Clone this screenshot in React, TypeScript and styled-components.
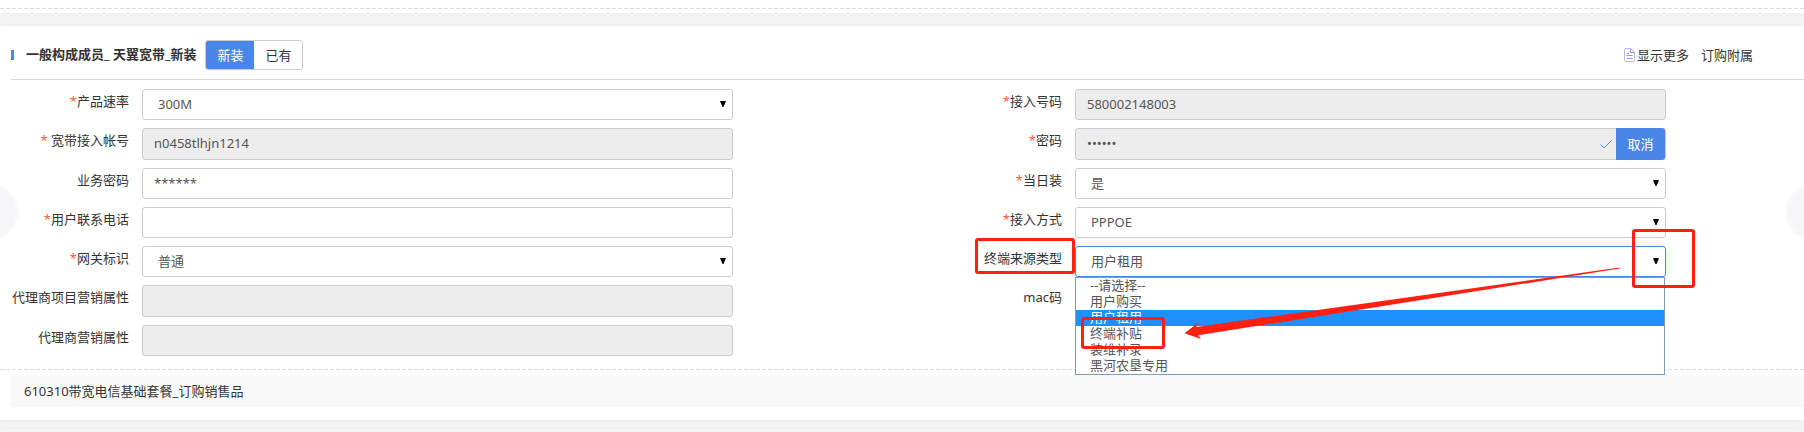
import React from "react";
import styled, { createGlobalStyle, css } from "styled-components";

const Global = createGlobalStyle`
  *, *::before, *::after { box-sizing: border-box; }
  body { margin: 0; background: #f4f4f4; overflow-x: hidden; }
  body, button, input, select {
    font-family: "Noto Sans", "Noto Sans CJK SC", sans-serif;
    font-size: 13px;
    color: #333;
  }
`;

const Page = styled.div`
  position: relative;
  overflow: hidden;
`;

const Dashes = styled.div`
  height: 1px;
  background: repeating-linear-gradient(90deg, #ddd 0 4px, transparent 4px 6px);
`;

const Card = styled.section`
  background: #fff;
  box-shadow: 0 0 6px rgba(0, 0, 0, 0.05);
`;

const PreviousCard = styled(Card)`
  padding: 8px 0 4px;
  margin-bottom: 13px;
`;

const NextCard = styled(Card)`
  margin-top: 9px;
  height: 3px;
  background: #f6f6f6;
`;

const Header = styled.header`
  display: flex;
  align-items: center;
  margin-left: 11px;
  padding: 14px 51px 9px 0;
  border-bottom: 1px solid #d9d9d9;
`;

const Marker = styled.span`
  width: 3px;
  height: 10px;
  margin-right: 12px;
  background: #4a86e8;
`;

const Title = styled.h2`
  margin: 0 9px 2px 0;
  font-size: 13px;
  line-height: 20px;
  font-weight: 600;
  white-space: pre;
`;

const Toggle = styled.div`
  display: flex;
  border: 1px solid #ccc;
  border-radius: 3px;
  overflow: hidden;
`;

const ToggleButton = styled.button<{ $active?: boolean }>`
  width: 48px;
  height: 28px;
  padding: 0 0 1px;
  border: 0;
  background: ${(p) => (p.$active ? "#4a86e8" : "#fff")};
  color: ${(p) => (p.$active ? "#fff" : "#333")};
`;

const Links = styled.nav`
  display: flex;
  gap: 12px;
  margin-left: auto;
`;

const HeaderLink = styled.a`
  display: flex;
  align-items: center;
  gap: 2px;
  line-height: 20px;
  color: #333;
  text-decoration: none;
`;

const Form = styled.form`
  display: grid;
  grid-template-columns: 1fr 1fr;
  grid-template-rows: repeat(7, 1fr);
  column-gap: 200px;
  row-gap: 8px;
  min-height: 267px;
  margin: 9px 138px 13px 0;
`;

const Row = styled.div`
  display: grid;
  grid-template-columns: 129px 1fr;
  column-gap: 13px;
`;

const Label = styled.label`
  line-height: 24px;
  text-align: right;
  white-space: nowrap;
`;

const Star = styled.span`
  color: #ff5a36;
`;

const Control = styled.div<{ $focus?: boolean }>`
  position: relative;
  display: flex;
  border-radius: 3px;
  ${(p) => p.$focus && css`box-shadow: 0 0 8px rgba(170, 210, 110, 0.4);`}
`;

const box = css`
  flex: 1;
  width: 100%;
  min-width: 0;
  height: 100%;
  border: 1px solid #ccc;
  border-radius: 3px;
  background: #fff;
  color: #555;
  outline: 0;
`;

const TextBox = styled.input`
  ${box}
  padding: 0 11px 1px;
  &:read-only { background: #ededed; }
`;

const SelectBox = styled.select<{ $focus?: boolean }>`
  ${box}
  appearance: none;
  padding: 0 15px 1px;
  border-color: ${(p) => (p.$focus ? "#4a86e8" : "#ccc")};
`;

const Arrow = styled.svg`
  position: absolute;
  right: 7px;
  top: 12px;
  pointer-events: none;
`;

const Check = styled.svg`
  position: absolute;
  right: 54px;
  top: 12px;
`;

const CancelButton = styled.button`
  position: absolute;
  top: 0;
  right: 1px;
  width: 49px;
  height: 100%;
  padding: 0;
  border: 0;
  border-radius: 0 3px 3px 0;
  background: #4a86e8;
  color: #fff;
`;

const Options = styled.ul`
  position: absolute;
  z-index: 2;
  top: 100%;
  left: 0;
  right: 1px;
  margin: 0;
  padding: 0;
  border: 1px solid #7f9db9;
  background: #fff;
  list-style: none;
`;

const Option = styled.li<{ $selected?: boolean }>`
  padding-left: 14px;
  height: 16px;
  line-height: 14px;
  color: ${(p) => (p.$selected ? "#fff" : "#555")};
  background: ${(p) => (p.$selected ? "#1e90ff" : "#fff")};
`;

const Footer = styled.div`
  padding: 5px 0 13px 11px;
`;

const Offer = styled.p`
  margin: 0;
  padding: 0 13px;
  line-height: 32px;
  border-radius: 4px 0 0 4px;
  background: #f9f9f9;
`;

const SideHandle = styled.button<{ $side: "left" | "right" }>`
  position: absolute;
  top: 183px;
  ${(p) => p.$side}: -41px;
  width: 60px;
  height: 58px;
  border: 0;
  border-radius: 50%;
  background: radial-gradient(closest-side, #f6f6f8 85%, #fbfbfc 100%);
`;

const Mark = styled.span<{ $top: number; $left: number; $w: number; $h: number }>`
  position: absolute;
  z-index: 3;
  top: ${(p) => p.$top}px;
  left: ${(p) => p.$left}px;
  width: ${(p) => p.$w}px;
  height: ${(p) => p.$h}px;
  border: 3px solid #ff2010;
  border-radius: 3px;
  pointer-events: none;
`;

const EndMark = styled(Mark)`
  left: auto;
  right: -29px;
`;

const Pointer = styled.svg`
  position: absolute;
  z-index: 3;
  top: 20px;
  right: 46px;
  pointer-events: none;
`;

type FieldProps = {
  id: string;
  label: string;
  required?: boolean;
  spaced?: boolean;
};

const FieldLabel = ({ id, label, required, spaced }: FieldProps) => (
  <Label htmlFor={id}>
    {required && <Star>*{spaced ? " " : ""}</Star>}
    {label}
  </Label>
);

const InputField = ({
  value = "",
  readOnly,
  type = "text",
  children,
  ...rest
}: FieldProps & { value?: string; readOnly?: boolean; type?: string; children?: React.ReactNode }) => (
  <Row>
    <FieldLabel {...rest} />
    <Control>
      <TextBox id={rest.id} type={type} defaultValue={value} readOnly={readOnly} />
      {children}
    </Control>
  </Row>
);

const SelectField = ({
  options,
  value,
  focus,
  children,
  ...rest
}: FieldProps & { options: string[]; value: string; focus?: boolean; children?: React.ReactNode }) => (
  <Row>
    <FieldLabel {...rest} />
    <Control $focus={focus}>
      <SelectBox id={rest.id} defaultValue={value} $focus={focus}>
        {options.map((o) => (
          <option key={o}>{o}</option>
        ))}
      </SelectBox>
      <Arrow width="6" height="6" viewBox="0 0 6 6">
        <path d="M0 0H6L3.5 6H2.5Z" fill="#000" />
      </Arrow>
      {children}
    </Control>
  </Row>
);

const sources = ["--请选择--", "用户购买", "用户租用", "终端补贴", "装维补录", "黑河农垦专用"];

export default function App() {
  return (
    <Page>
      <Global />
      <PreviousCard>
        <Dashes />
      </PreviousCard>
      <Card>
        <Header>
          <Marker />
          <Title>一般构成成员_ 天翼宽带_新装</Title>
          <Toggle>
            <ToggleButton type="button" $active>新装</ToggleButton>
            <ToggleButton type="button">已有</ToggleButton>
          </Toggle>
          <Links>
            <HeaderLink href="#more">
              <svg width="11" height="14" viewBox="0 0 11 14" fill="none" stroke="#b9b9ee">
                <path d="M.5 1.5Q.5.5 1.5.5H6.5L10.5 4.5V12.5Q10.5 13.5 9.5 13.5H1.5Q.5 13.5.5 12.5Z" />
                <path d="M6.500.5V4.500H10.500M2.500 5.500H5M2.500 7.500H8.500M2.500 10.500H8.500" stroke="#8f9be8" />
              </svg>
              显示更多
            </HeaderLink>
            <HeaderLink href="#attached">订购附属</HeaderLink>
          </Links>
        </Header>
        <Form>
          <SelectField id="speed" label="产品速率" required options={["300M"]} value="300M" />
          <InputField id="number" label="接入号码" required value="580002148003" readOnly />
          <InputField id="account" label="宽带接入帐号" required spaced value="n0458tlhjn1214" readOnly />
          <InputField id="password" label="密码" required type="password" value="123456" readOnly>
            <Check width="12" height="9" viewBox="0 0 12 9" fill="none" stroke="#5b8fee">
              <path d="M.5 4.500L4 8L11.500.5" />
            </Check>
            <CancelButton type="button">取消</CancelButton>
          </InputField>
          <InputField id="service" label="业务密码" value="******" />
          <SelectField id="sameday" label="当日装" required options={["是", "否"]} value="是" />
          <InputField id="phone" label="用户联系电话" required />
          <SelectField id="access" label="接入方式" required options={["PPPOE"]} value="PPPOE" />
          <SelectField id="gateway" label="网关标识" required options={["普通"]} value="普通" />
          <SelectField id="source" label="终端来源类型" options={sources} value="用户租用" focus>
            <Options role="listbox">
              {sources.map((s) => (
                <Option key={s} role="option" aria-selected={s === "用户租用"} $selected={s === "用户租用"}>
                  {s}
                </Option>
              ))}
            </Options>
            <Mark $top={-8} $left={-100} $w={100} $h={36} />
            <Mark $top={71} $left={6} $w={84} $h={32} />
            <EndMark $top={-17} $left={0} $w={63} $h={59} />
            <Pointer width="436" height="76" viewBox="0 0 436 76">
              <path d="M435.500 1.500V2.500L14 69.300L17 73L.5 67.300L14.700 56.300L12.300 61Z" fill="#ff2010" />
            </Pointer>
          </SelectField>
          <InputField id="project" label="代理商项目营销属性" readOnly />
          <Row>
            <Label as="span">mac码</Label>
          </Row>
          <InputField id="agent" label="代理商营销属性" readOnly />
        </Form>
        <Dashes />
        <Footer>
          <Offer>610310带宽电信基础套餐_订购销售品</Offer>
        </Footer>
      </Card>
      <NextCard />
      <SideHandle type="button" $side="left" aria-label="上一页" />
      <SideHandle type="button" $side="right" aria-label="下一页" />
    </Page>
  );
}
